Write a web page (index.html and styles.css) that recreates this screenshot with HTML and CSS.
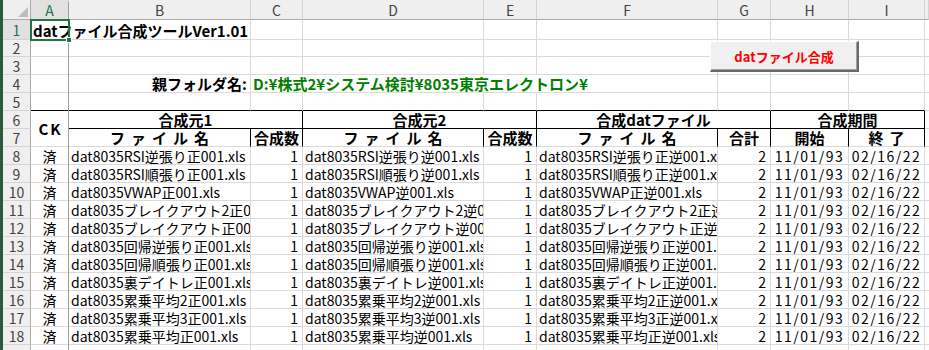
FILE: index.html
```html
<!DOCTYPE html>
<html lang="ja">
  <head>
    <meta charset="UTF-8" />
    <title>datファイル合成ツール</title>
    <link rel="stylesheet" href="styles.css">
  </head>
  <body>
    <div class="window">
      <table class="sheet">
        <colgroup>
          <col class="w-rh"><col class="w-a"><col class="w-b"><col class="w-c"><col class="w-d">
          <col class="w-e"><col class="w-f"><col class="w-g"><col class="w-h"><col class="w-i"><col class="w-j">
        </colgroup>
        <thead>
          <tr class="r-head">
            <th class="corner">
              <svg width="10" height="10" viewBox="0 0 10 10"><polygon points="10,0 10,10 0,10" fill="#bcbcbc"/></svg>
            </th>
            <th class="ch on">A</th><th class="ch">B</th><th class="ch">C</th><th class="ch">D</th>
            <th class="ch">E</th><th class="ch">F</th><th class="ch">G</th><th class="ch">H</th>
            <th class="ch">I</th><th class="ch"></th>
          </tr>
        </thead>
        <tbody id="rows">
          <tr class="r1">
            <th class="rh on">1</th>
            <td colspan="2" class="title">datファイル合成ツールVer1.01</td>
            <td></td><td></td><td></td><td></td><td></td><td></td><td></td><td class="j"></td>
          </tr>
          <tr class="r2">
            <th class="rh">2</th>
            <td></td><td></td><td></td><td></td><td></td><td></td><td></td><td></td><td></td><td class="j"></td>
          </tr>
          <tr class="r3">
            <th class="rh">3</th>
            <td></td><td></td><td></td><td></td><td></td><td></td><td></td><td></td><td></td><td class="j"></td>
          </tr>
          <tr class="r4">
            <th class="rh">4</th>
            <td></td>
            <td class="label">親フォルダ名:</td>
            <td colspan="4" class="path">D:¥株式2¥システム検討¥8035東京エレクトロン¥</td>
            <td></td><td></td><td></td><td class="j"></td>
          </tr>
          <tr class="r5">
            <th class="rh">5</th>
            <td></td><td></td><td></td><td></td><td></td><td></td><td></td><td></td><td></td><td class="j"></td>
          </tr>
          <tr class="r6">
            <th class="rh">6</th>
            <td rowspan="2" class="hd ck">CK</td>
            <td colspan="2" class="hd grp">合成元1</td>
            <td colspan="2" class="hd grp">合成元2</td>
            <td colspan="2" class="hd grp">合成datファイル</td>
            <td colspan="2" class="hd grp">合成期間</td>
            <td class="j"></td>
          </tr>
          <tr class="r7">
            <th class="rh">7</th>
            <td class="hd sub spaced">ファイル名</td>
            <td class="hd sub">合成数</td>
            <td class="hd sub spaced">ファイル名</td>
            <td class="hd sub">合成数</td>
            <td class="hd sub spaced">ファイル名</td>
            <td class="hd sub">合計</td>
            <td class="hd sub">開始</td>
            <td class="hd sub spaced">終了</td>
            <td class="j"></td>
          </tr>
        </tbody>
      </table>

      <div class="freeze"></div>
      <div class="cursor"><span class="handle"></span></div>
      <button type="button" class="merge-btn">datファイル合成</button>
    </div>

    <script>
      const rows = document.getElementById('rows');
      const systems = [
        'RSI逆張り', 'RSI順張り', 'VWAP', 'ブレイクアウト2', 'ブレイクアウト', '回帰逆張り',
        '回帰順張り', '裏デイトレ', '累乗平均2', '累乗平均3', '累乗平均'
      ];

      systems.forEach(function (name, i) {
        const row = document.createElement('tr');
        row.className = 'data';
        row.innerHTML = `
          <th class="rh">${i + 8}</th>
          <td class="mid">済</td>
          <td>dat8035${name}正001.xls</td>
          <td class="num">1</td>
          <td>dat8035${name}逆001.xls</td>
          <td class="num">1</td>
          <td>dat8035${name}正逆001.xls</td>
          <td class="num">2</td>
          <td class="mid date">11/01/93</td>
          <td class="mid date">02/16/22</td>
          <td class="j"></td>
        `;
        rows.appendChild(row);
      });

      const tail = document.createElement('tr');
      tail.className = 'data';
      tail.innerHTML = '<th class="rh"></th>' + '<td></td>'.repeat(9) + '<td class="j"></td>';
      rows.appendChild(tail);
    </script>
  </body>
</html>
```

FILE: styles.css
```css
* {
  box-sizing: border-box;
}
body {
  margin: 0;
  background: #fff;
  font-family: "Noto Sans CJK JP", "Noto Sans", sans-serif;
}
.window {
  position: relative;
  width: 929px;
  height: 350px;
  overflow: hidden;
  border-left: 3px solid #2c5b3c;
}
.sheet {
  table-layout: fixed;
  border-collapse: separate;
  border-spacing: 0;
  width: 926px;
  font-size: 14px;
  color: #000;
}
.w-rh { width: 28px; }
.w-a { width: 38px; }
.w-b { width: 182px; }
.w-c { width: 52px; }
.w-d { width: 181px; }
.w-e { width: 53px; }
.w-f { width: 181px; }
.w-g { width: 53px; }
.w-h { width: 78px; }
.w-i { width: 76px; }
.w-j { width: 4px; }

.sheet td,
.sheet th {
  padding: 0 2px;
  border-right: 1px solid #dadada;
  border-bottom: 1px solid #dadada;
  white-space: nowrap;
  overflow: hidden;
  vertical-align: bottom;
  line-height: 16px;
  font-weight: normal;
  text-align: left;
}

/* headers */
.r-head { height: 20px; }
.sheet .ch,
.sheet .corner {
  background: #efefef;
  color: #444;
  text-align: center;
  vertical-align: middle;
  border-right-color: #d4d4d4;
  border-bottom-color: #ababab;
  font-size: 14px;
}
.sheet .corner {
  text-align: right;
  vertical-align: bottom;
  padding: 0 2px 2px 0;
  border-right-color: #ababab;
}
.corner svg {
  display: block;
  margin-left: auto;
}
.sheet .rh {
  background: #efefef;
  color: #444;
  text-align: center;
  vertical-align: middle;
  padding: 0;
  overflow: visible;
  border-right-color: #ababab;
  border-bottom-color: #d4d4d4;
  font-size: 14px;
  line-height: 14px;
}
.sheet .on {
  background: #e1e1e1;
  color: #217346;
}

/* row heights */
.r1 { height: 20px; }
.r2 { height: 17px; }
.r3,
.r4,
.r5,
.r6,
.r7,
.data { height: 18px; }

.sheet .j {
  border-right: none;
}

.sheet .title {
  font-weight: bold;
  font-size: 15px;
}
.sheet .label {
  text-align: right;
  font-weight: bold;
  font-size: 15px;
  padding-right: 3px;
}
.sheet .path {
  color: #008000;
  font-weight: bold;
  font-size: 15px;
}

/* table header block */
.sheet .r5 td:not(.j) {
  border-bottom-color: #000;
}
.sheet .hd {
  font-weight: bold;
  font-size: 15px;
  text-align: center;
}
.sheet .ck {
  vertical-align: middle;
  letter-spacing: 2px;
  text-indent: 2px;
}
.sheet .grp {
  border-right-color: #000;
  border-bottom-color: #000;
}
.sheet .sub {
  border-right-color: #000;
}
.spaced {
  letter-spacing: 6px;
  text-indent: 6px;
}

/* data rows */
.sheet .num {
  text-align: right;
  padding-right: 4px;
}
.sheet .mid {
  text-align: center;
}
.sheet .date {
  letter-spacing: 1.5px;
}

/* overlays */
.freeze {
  position: absolute;
  left: 65px;
  top: 2px;
  bottom: 0;
  width: 1px;
  background: #9e9e9e;
}
.cursor {
  position: absolute;
  left: 27px;
  top: 19px;
  width: 40px;
  height: 22px;
  border: 2px solid #217346;
}
.handle {
  position: absolute;
  right: -4px;
  bottom: -4px;
  width: 6px;
  height: 6px;
  background: #217346;
  border: 1px solid #fff;
}
.merge-btn {
  position: absolute;
  left: 707px;
  top: 41px;
  width: 149px;
  height: 31px;
  padding: 0;
  background: #f0f0f0;
  border: 1px solid #fff;
  border-right: 2px solid #696969;
  border-bottom: 2px solid #696969;
  box-shadow: inset -1px -1px 0 #a0a0a0;
  color: #ff0000;
  font-family: "Noto Sans CJK JP", sans-serif;
  font-weight: bold;
  font-size: 13px;
}
```
